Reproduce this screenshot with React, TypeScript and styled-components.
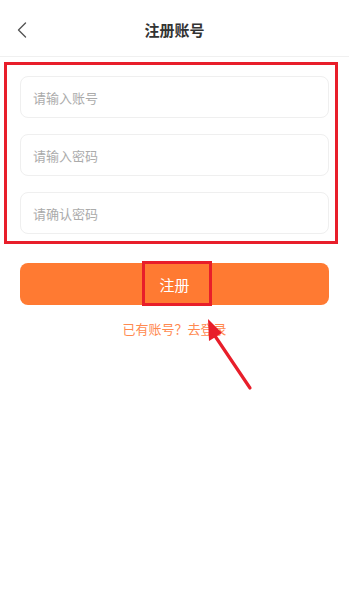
import styled, { createGlobalStyle } from 'styled-components';

const GlobalStyle = createGlobalStyle`
  html, body {
    margin: 0;
    padding: 0;
    background: #ffffff;
  }
  body {
    font-family: 'Noto Sans CJK SC', 'Noto Sans', sans-serif;
  }
  * {
    box-sizing: border-box;
  }
`;

const fields = ['请输入账号', '请输入密码', '请确认密码'];

export default function App() {
  return (
    <Page>
      <GlobalStyle />
      <Header>
        <BackBtn aria-label="返回">
          <svg width="10" height="16" viewBox="0 0 10 16" fill="none">
            <path d="M8.5 1 L1.5 8 L8.5 15" stroke="#555" strokeWidth="1.4" strokeLinecap="round" strokeLinejoin="round" />
          </svg>
        </BackBtn>
        <Title>注册账号</Title>
        <span />
      </Header>

      <FieldGroup>
        {fields.map((f) => (
          <Input key={f} placeholder={f} />
        ))}
      </FieldGroup>

      <SubmitWrap>
        <SubmitBtn>注册</SubmitBtn>
        <Highlight />
      </SubmitWrap>

      <LoginLink>已有账号？去登录</LoginLink>

      {/* 标注箭头 */}
      <Arrow width="60" height="75" viewBox="0 0 60 75">
        <line x1="52" y1="72" x2="17" y2="20" stroke="#e81e2a" strokeWidth="3.2" strokeLinecap="round" />
        <polygon points="10,3 24,17 11,25" fill="#e81e2a" />
      </Arrow>
    </Page>
  );
}

const Page = styled.div`
  position: relative;
  width: 349px;
  height: 600px;
  background: #fff;
  overflow: hidden;
`;

const Header = styled.header`
  height: 57px;
  padding: 3px 12px 0;
  display: grid;
  grid-template-columns: 40px 1fr 40px;
  align-items: center;
  border-bottom: 1px solid #f0f0f0;
`;

const BackBtn = styled.button`
  width: 20px;
  height: 20px;
  padding: 0;
  border: 0;
  background: transparent;
  display: flex;
  align-items: center;
  justify-content: center;
`;

const Title = styled.h1`
  margin: 0;
  text-align: center;
  font-size: 15px;
  font-weight: 700;
  color: #333;
`;

const FieldGroup = styled.div`
  margin: 5px 11px 0 4px;
  border: 3px solid #e81e2a;
  padding: 11px 6px 7px 13px;
  display: flex;
  flex-direction: column;
  gap: 16px;
`;

const Input = styled.input`
  width: 100%;
  height: 42px;
  border: 1px solid #efefef;
  border-radius: 8px;
  padding: 0 12px;
  font-family: 'Noto Sans CJK SC', sans-serif;
  font-size: 13px;
  color: #333;
  outline: none;
  background: #fff;
  &::placeholder {
    color: #ababab;
  }
`;

const SubmitWrap = styled.div`
  position: relative;
  margin: 19px 20px 0 20px;
`;

const SubmitBtn = styled.button`
  width: 100%;
  height: 42px;
  border: 0;
  border-radius: 8px;
  background: #ff7a32;
  color: #fff;
  font-family: 'Noto Sans CJK SC', sans-serif;
  font-size: 15px;
  display: block;
`;

const Highlight = styled.div`
  position: absolute;
  left: 122px;
  top: -2px;
  width: 70px;
  height: 45px;
  border: 3px solid #e81e2a;
  pointer-events: none;
`;

const LoginLink = styled.p`
  margin: 14px 0 0;
  text-align: center;
  font-size: 13px;
  color: #ff8a50;
`;

const Arrow = styled.svg`
  position: absolute;
  left: 198px;
  top: 316px;
`;
